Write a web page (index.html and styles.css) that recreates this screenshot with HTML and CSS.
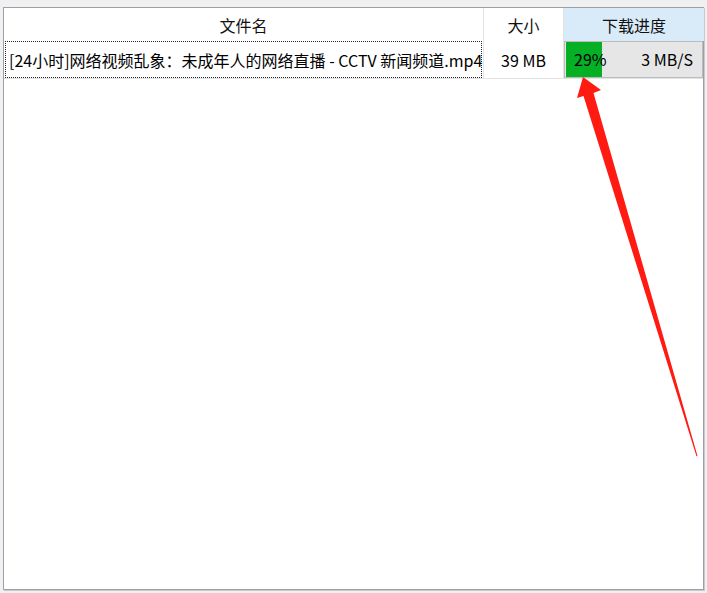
FILE: index.html
```html
<!DOCTYPE html>
<html lang="zh">
<head>
<meta charset="utf-8">
<title>下载列表</title>
<link rel="stylesheet" href="styles.css">
</head>
<body>
<div class="panel">
  <div class="grid head">
    <div class="cell hc">文件名</div>
    <div class="cell hc">大小</div>
    <div class="cell hc active">下载进度</div>
  </div>
  <div class="grid row">
    <div class="cell name"><span class="focus">[24小时]网络视频乱象：未成年人的网络直播 - CCTV 新闻频道.mp4</span></div>
    <div class="cell size">39 MB</div>
    <div class="cell prog">
      <div class="bar">
        <div class="fill" style="width:26%"></div>
        <span class="pct">29%</span>
        <span class="speed">3 MB/S</span>
      </div>
    </div>
  </div>
</div>
<svg class="arrow" width="707" height="593" viewBox="0 0 707 593">
  <polygon fill="#ff1a12" points="583,77 601,90 593.5,93 697.5,456 696.5,456.3 583.5,96 577,98"/>
</svg>
</body>
</html>
```
FILE: styles.css
```css
* { box-sizing: border-box; }
html, body { margin: 0; padding: 0; }
body {
  background: #f0f0f0;
  width: 707px;
  height: 593px;
  padding: 7px 3px 0 3px;
  font-family: "Noto Sans CJK SC", "Noto Sans", sans-serif;
  font-size: 16px;
  color: #000;
  position: relative;
}
.panel {
  width: 701px;
  height: 583px;
  background: #fff;
  border: 1px solid #9ba0a8;
  box-shadow: 1px 1px 0 #c9c9c9;
}
.grid {
  display: grid;
  grid-template-columns: 480px 80px 140px;
}
.head { height: 33px; }
.row { height: 38px; border-bottom: 1px solid #e3e3e3; }
.cell {
  display: flex;
  align-items: center;
  white-space: nowrap;
  overflow: hidden;
  line-height: 1;
}
.cell:nth-child(1), .cell:nth-child(2) { border-right: 1px solid #e5e5e5; }
.hc { justify-content: center; color: #111; }
.hc.active { background: #d9ebf9; }
.name { padding: 0 1px; }
.focus {
  display: flex;
  align-items: center;
  width: 100%;
  height: 37px;
  padding-left: 4px;
  outline: 1px dotted #222;
  outline-offset: -1px;
}
.size { justify-content: center; }
.prog { padding: 0 1px 1px 0; }
.bar {
  position: relative;
  width: 100%;
  height: 37px;
  background: #e6e6e6;
  border: 1px solid #bcbcbc;
  display: flex;
  align-items: center;
  justify-content: space-between;
  padding: 0 9px 0 9px;
}
.fill {
  position: absolute;
  left: 1px;
  top: 0;
  bottom: 0;
  background: #06b025;
}
.pct, .speed { position: relative; }
.arrow { position: absolute; left: 0; top: 0; pointer-events: none; }
```
